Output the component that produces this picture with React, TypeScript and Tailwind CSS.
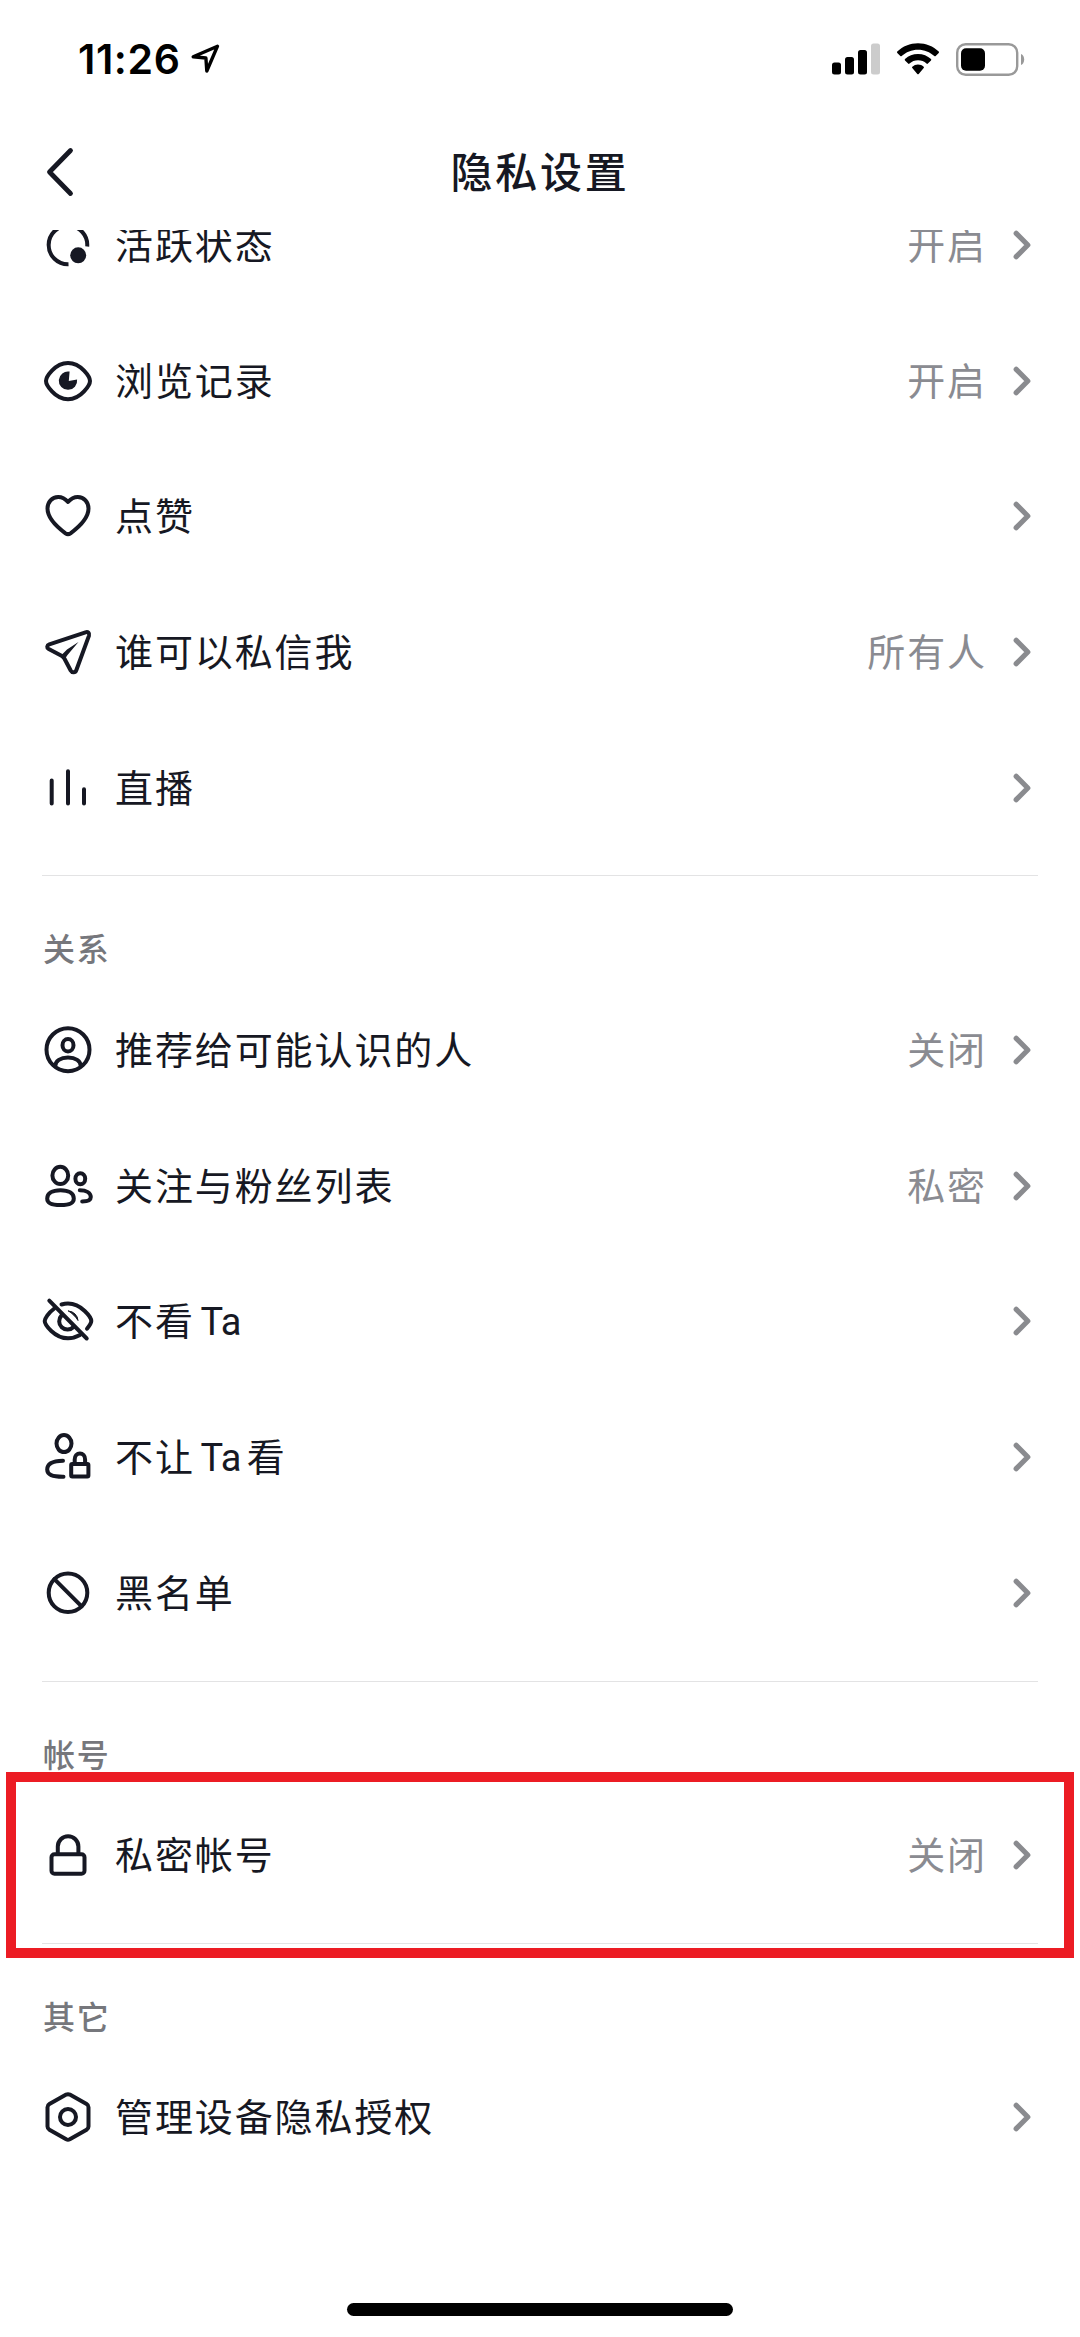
import React from 'react';

type IconProps = { children: React.ReactNode };

const Icon: React.FC<IconProps> = ({ children }) => (
  <svg
    viewBox="0 0 54 54"
    className="w-[54px] h-[54px] shrink-0"
    fill="none"
    stroke="#161823"
    strokeWidth="4"
    strokeLinecap="round"
    strokeLinejoin="round"
  >
    {children}
  </svg>
);

const ActiveIcon = () => (
  <Icon>
    <path d="M46.2 28.5A19.3 19.3 0 1 0 27.5 46.3" strokeLinecap="butt" />
    <circle cx="37.2" cy="37.3" r="8" fill="#161823" stroke="none" />
  </Icon>
);

const EyeIcon = () => (
  <Icon>
    <path d="M5 27C5 23.5 13.5 9 27 9s22 14.500 22 18-8.500 18.300-22 18.300S5 30.500 5 27Z" />
    <path d="M28.600 17.600A9.200 9.200 0 1 0 36.100 25.500L27.800 27Z" fill="#161823" stroke="none" />
  </Icon>
);

const HeartIcon = () => (
  <Icon>
    <path d="M27 13C24 9.500 20.700 8 17.200 8 11 8 6.500 13 6.500 19.500c0 9.500 9.500 18.500 18 24.800q2.500 1.700 5 0c8.500-6.300 18-15.300 18-24.800C47.500 13 43 8 36.800 8c-3.500 0-6.800 1.500-9.800 5Z" />
  </Icon>
);

const SendIcon = () => (
  <Icon>
    <path d="M44.500 7.300 8.300 19.300c-2.600 1-2.700 3.600-.6 4.800l12.800 6.700c1.400.8 2.300 1.800 3 3l6.200 11.700c1.500 2.600 4.600 2.400 5.600-.2l12.700-34.700c.8-2.400-1-4.100-3.500-3.300Z" />
    <path d="M37.500 17 26 24.500l-6.500 6.500 4 3.500 3-4.500Z" fill="#161823" stroke="none" />
  </Icon>
);

const LiveIcon = () => (
  <Icon>
    <path d="M10.700 19.600v23M27 10.300v32.300M43 28.200v14.400" />
  </Icon>
);

const UserCircleIcon = () => (
  <Icon>
    <circle cx="27" cy="26.700" r="21.500" />
    <ellipse cx="27" cy="22.300" rx="5.500" ry="6.200" />
    <path d="M14.300 43c0-5.200 5.200-8.400 12.700-8.400S39.700 37.800 39.700 43" />
  </Icon>
);

const UsersIcon = () => (
  <Icon>
    <ellipse cx="19.300" cy="16.400" rx="7.900" ry="8.600" />
    <path d="M19.500 31.200C11 31.200 6.200 34.500 6.200 39.500c0 4.500 3.300 6.600 13.300 6.600s13.300-2.100 13.300-6.600c0-5-4.800-8.300-13.300-8.300Z" />
    <ellipse cx="39.300" cy="19.800" rx="4.900" ry="5.500" />
    <path d="M38.800 31.300c6.700 0 11 2.700 11 6.800 0 3-2.400 4.500-8.600 4.500" />
  </Icon>
);

const EyeOffIcon = () => (
  <Icon>
    <path d="M8.300 6.700 45.700 44.500" />
    <path d="M20.500 10.500c2-.6 4.300-1 6.500-1C40.500 9.500 50.300 23.500 50.300 27c0 1.400-1.600 4.500-4.300 7.700" />
    <path d="M13.300 14.500C7.200 19 3.700 24.900 3.700 27c0 3.500 9.800 17.300 23.300 17.300 4.500 0 8.400-1.400 12-3.300" />
    <path d="M20.500 21.500A8.300 8.300 0 1 0 32.500 33" />
    <path d="M27.500 17A10 10 0 0 1 37 26.500C35 23 31 19 27.500 17Z" fill="#161823" strokeWidth="1" />
  </Icon>
);

const UserLockIcon = () => (
  <Icon>
    <ellipse cx="23" cy="13.600" rx="7.500" ry="8.500" />
    <path d="M22 30.800C12 31 6.200 34 6.200 39.500c0 5.200 5 7.300 16.300 7.200" />
    <rect x="30.200" y="34" width="17.200" height="12.600" rx="1" />
    <path d="M33.700 34v-4.600a5.200 6 0 0 1 10.400 0V34" />
  </Icon>
);

const BanIcon = () => (
  <Icon>
    <circle cx="27" cy="26.800" r="19.300" />
    <path d="M13.400 13.200 40.600 40.400" />
  </Icon>
);

const LockIcon = () => (
  <Icon>
    <rect x="10.500" y="26.300" width="33" height="19.400" rx="3" />
    <path d="M16.800 26V18.500a10.300 10.300 0 0 1 20.600 0V26" />
  </Icon>
);

const DeviceIcon = () => (
  <Icon>
    <path d="M25.200 4.600q1.800-.9 3.600 0L45.600 14q1.900 1.100 1.900 3.200v19.400q0 2.100-1.900 3.200L28.800 49.200q-1.800.9-3.600 0L8.400 39.800q-1.900-1.100-1.900-3.200V17.200q0-2.100 1.900-3.200Z" />
    <circle cx="27" cy="27" r="8" />
  </Icon>
);

interface Item {
  label: React.ReactNode;
  icon: React.FC;
  value?: string;
}

interface Group {
  title?: string;
  items: Item[];
  highlighted?: boolean;
}

// Latin letters sit tighter than the Chinese glyphs around them
const Ta = () => <span className="tracking-[-0.300px]">Ta</span>;

const groups: Group[] = [
  {
    items: [
      { label: '活跃状态', icon: ActiveIcon, value: '开启' },
      { label: '浏览记录', icon: EyeIcon, value: '开启' },
      { label: '点赞', icon: HeartIcon },
      { label: '谁可以私信我', icon: SendIcon, value: '所有人' },
      { label: '直播', icon: LiveIcon },
    ],
  },
  {
    title: '关系',
    items: [
      { label: '推荐给可能认识的人', icon: UserCircleIcon, value: '关闭' },
      { label: '关注与粉丝列表', icon: UsersIcon, value: '私密' },
      { label: <>不看 <Ta /></>, icon: EyeOffIcon },
      { label: <>不让 <Ta /> 看</>, icon: UserLockIcon },
      { label: '黑名单', icon: BanIcon },
    ],
  },
  {
    title: '帐号',
    highlighted: true,
    items: [{ label: '私密帐号', icon: LockIcon, value: '关闭' }],
  },
  {
    title: '其它',
    items: [{ label: '管理设备隐私授权', icon: DeviceIcon }],
  },
];

const StatusBar = () => (
  <div className="h-[118px] flex items-center pl-[78px] pr-[55px]">
    <span className="font-['Inter',sans-serif] font-semibold text-[41px] leading-none tracking-[0.6px] text-black">
      11:26
    </span>
    <svg className="w-[30px] h-[32px] ml-[9px]" viewBox="0 0 30 32" fill="none" stroke="#000" strokeWidth="3.400" strokeLinejoin="round">
      <path d="M27.500 3.200 3.200 13.800l12.700 1.200.9 13Z" />
    </svg>
    <div className="ml-auto flex items-center">
      <svg className="w-[48px] h-[32px]" viewBox="0 0 48 32">
        <rect x="0" y="19.500" width="9" height="12" rx="2.500" />
        <rect x="13" y="14" width="9" height="17.500" rx="2.500" />
        <rect x="26" y="7" width="9" height="24.500" rx="2.500" />
        <rect x="39" y="0.500" width="9" height="31" rx="2.500" fill="#cccccc" />
      </svg>
      <svg className="w-[42px] h-[32px] ml-[17px]" viewBox="0 0 42 32">
        <path d="M21 .3c8 0 15.300 3.100 20.700 8.200.4.400.4 1 0 1.400l-3 3.100c-.4.400-1 .4-1.400 0C33 9 27.300 6.700 21 6.700S9 9 4.700 13c-.4.400-1 .4-1.400 0l-3-3.100c-.4-.4-.4-1 0-1.400C5.700 3.400 13 .3 21 .3Z" />
        <path d="M21 11c5 0 9.600 1.900 13 5.100.4.400.4 1 0 1.400l-3.100 3.100c-.4.400-1 .4-1.400 0A12.400 12.400 0 0 0 21 17.300c-3.300 0-6.200 1.200-8.500 3.300-.4.400-1 .4-1.400 0L8 17.500c-.4-.4-.4-1 0-1.400A19 19 0 0 1 21 11Z" />
        <path d="M21 21.600c2.200 0 4.200.8 5.700 2.100.4.400.4 1 0 1.400l-5 5.800c-.4.400-1 .4-1.400 0l-5-5.800c-.4-.4-.4-1 0-1.400a8.600 8.600 0 0 1 5.700-2.100Z" />
      </svg>
      <svg className="w-[69px] h-[33px] ml-[17px]" viewBox="0 0 69 33">
        <rect x="1.200" y="1.200" width="60" height="30.600" rx="8.500" fill="none" stroke="#999" strokeWidth="2.400" />
        <rect x="5" y="5.200" width="24" height="22.600" rx="5" />
        <path d="M65 11c2 .8 3.200 2.900 3.200 5.500S67 21.200 65 22Z" fill="#999" />
      </svg>
    </div>
  </div>
);

const Header = () => (
  <header className="h-[112px] grid grid-cols-[1fr_auto_1fr] items-center pl-[45px] pr-[45px] text-[#161823]">
    <svg className="w-[30px] h-[50px] mb-[4px]" viewBox="0 0 30 50" fill="none" stroke="#161823" strokeWidth="4.800" strokeLinecap="round" strokeLinejoin="round">
      <path d="M25.500 3.500 4.500 25l21 21.500" />
    </svg>
    <h1 className="text-[42px] leading-none font-medium tracking-[2.700px]">隐私设置</h1>
  </header>
);

const Row: React.FC<Item> = ({ label, icon: ItemIcon, value }) => (
  <div className="h-[135.700px] flex items-center pl-[41px] pr-[48px] text-[38px] leading-none tracking-[1.900px]">
    <ItemIcon />
    <span className="ml-[20px] pt-[2px] text-[#161823] [word-spacing:-5.700px]">{label}</span>
    {value && <span className="ml-auto mr-[25px] pt-[2px] text-[#8a8b91]">{value}</span>}
    <svg
      className={`w-[20px] h-[32px] ${value ? '' : 'ml-auto'}`}
      viewBox="0 0 20 32"
      fill="none"
      stroke="#8a8b8f"
      strokeWidth="5.200"
      strokeLinecap="round"
      strokeLinejoin="round"
    >
      <path d="M4.200 4.300 15.800 16 4.200 27.700" />
    </svg>
  </div>
);

const Section: React.FC<Group> = ({ title, items, highlighted }) => (
  <section className="relative">
    {title && (
      <>
        <div className="mt-[20px] mx-[42px] h-px bg-[#e3e3e4]" />
        <h2 className="h-[105.700px] pt-[57px] pl-[43px] text-[32px] leading-[34px] tracking-[1.700px] font-medium text-[#76777c]">
          {title}
        </h2>
      </>
    )}
    {items.map((item, i) => (
      <Row key={i} {...item} />
    ))}
    {highlighted && (
      <div className="absolute left-[6px] top-[91px] w-[1068px] h-[186px] border-[10px] border-[#ec1c24]" />
    )}
  </section>
);

export default function App() {
  return (
    <div className="w-[1080px] h-[2337px] flex flex-col bg-white overflow-hidden font-['Roboto','Noto_Sans_CJK_SC',sans-serif]">
      <StatusBar />
      <Header />
      {/* The list is scrolled, so its first row is cut off under the header */}
      <main className="flex-1 overflow-hidden">
        <div className="-mt-[53px]">
          {groups.map((group, i) => (
            <Section key={i} {...group} />
          ))}
        </div>
      </main>
      <footer className="flex justify-center pb-[21px]">
        <div className="w-[386px] h-[13px] rounded-full bg-black" />
      </footer>
    </div>
  );
}
